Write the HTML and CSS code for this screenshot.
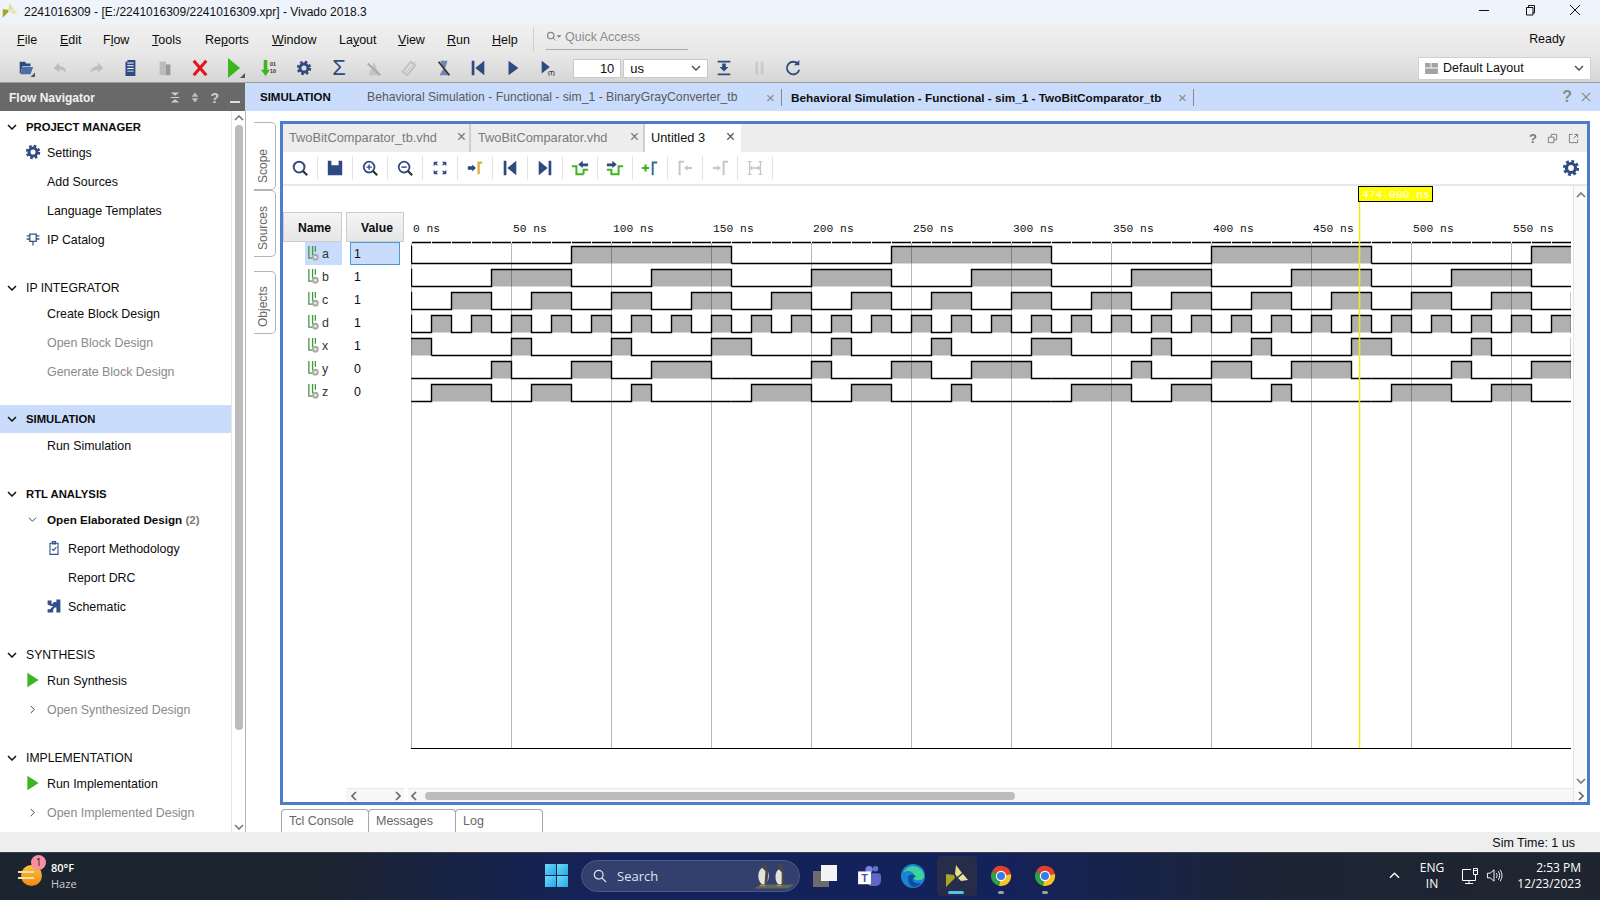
FILE: index.html
```html
<!DOCTYPE html>
<html lang="en">
<head>
<meta charset="utf-8">
<title>Vivado 2018.3</title>
<link rel="stylesheet" href="styles.css">
</head>
<body>
<svg class="defs" width="0" height="0">
  <symbol id="gear" viewBox="0 0 20 20"><circle cx="10" cy="10" r="7.5" fill="none" stroke="#2f4a80" stroke-width="3" stroke-dasharray="3.2 2.7"/><circle cx="10" cy="10" r="5" fill="none" stroke="#2f4a80" stroke-width="3.6"/></symbol>
  <symbol id="leaf" viewBox="0 0 24 24"><path d="M11 1l6 8-5 4-2-3z" fill="#e6e08a"/><path d="M1 10l8 1 1 3-9 9z" fill="#a8a520"/><path d="M13 14l5-4 5 6-7 1z" fill="#e8e4a0"/></symbol>
  <symbol id="sig" viewBox="0 0 14 18"><path d="M2 1v13h4M6 1v10M9 1v6" fill="none" stroke="#3d9a3d" stroke-width="1.4"/><circle cx="9" cy="13" r="3.6" fill="#aaa"/><circle cx="9" cy="13" r="1.4" fill="#eee"/></symbol>
  <symbol id="chrome" viewBox="0 0 24 24"><path d="M12 12L3.3 7A10 10 0 0 1 21.9 10z" fill="#e2402f"/><path d="M12 12l-8.700-5A10 10 0 0 0 10 21.800z" fill="#2e9e4a"/><path d="M12 12l9.900-2A10 10 0 0 1 10 21.800z" fill="#f7c325"/><circle cx="12" cy="12" r="5.200" fill="#fff"/><circle cx="12" cy="12" r="4" fill="#3b7de6"/></symbol>
</svg>

<header class="titlebar">
  <svg class="applogo" viewBox="0 0 24 24"><use href="#leaf"/></svg>
  <span class="title-text">2241016309 - [E:/2241016309/2241016309.xpr] - Vivado 2018.3</span>
  <svg class="winbtn" viewBox="0 0 12 12"><path d="M1 6.500h10" stroke="#111" fill="none"/></svg>
  <svg class="winbtn" viewBox="0 0 12 12"><path d="M2.500 3.500h6.500v7.500h-6.500zM4.500 3.500v-2h6v7.500h-2" stroke="#111" fill="none"/></svg>
  <svg class="winbtn" viewBox="0 0 12 12"><path d="M1 1l10 10M11 1L1 11" stroke="#111" fill="none"/></svg>
</header>

<div class="menubar">
  <nav class="menus">
    <span class="menu m-file"><u>F</u>ile</span>
    <span class="menu m-edit"><u>E</u>dit</span>
    <span class="menu m-flow">F<u>l</u>ow</span>
    <span class="menu m-tools"><u>T</u>ools</span>
    <span class="menu m-reports">Re<u>p</u>orts</span>
    <span class="menu m-window"><u>W</u>indow</span>
    <span class="menu m-layout">La<u>y</u>out</span>
    <span class="menu m-view"><u>V</u>iew</span>
    <span class="menu m-run"><u>R</u>un</span>
    <span class="menu m-help"><u>H</u>elp</span>
  </nav>
  <div class="quick">
    <svg class="quick-ic" viewBox="0 0 16 12"><circle cx="5" cy="5" r="3.500" fill="none" stroke="#888" stroke-width="1.400"/><path d="M7.500 7.500l3 3M12 5h4l-2 2z" stroke="#888" fill="#888"/></svg>
    <span>Quick Access</span>
  </div>
  <span class="ready">Ready</span>
</div>

<div class="toolbar">
  <span class="tb"><svg class="i20" viewBox="0 0 20 20"><path d="M3 3h6l1 2h5v3H6l-2 8H3z" fill="#2f4a80"/><path d="M6 9h12l-3 8H4z" fill="#4a6ea8"/><path d="M20 20h-5l5-5z" fill="#555"/></svg></span>
  <span class="tb"><svg class="i20" viewBox="0 0 20 20"><path d="M8 4L2 10l6 5v-3c4 0 6 1 8 4 0-5-3-8-8-8z" fill="#bdbdbd"/></svg></span>
  <span class="tb"><svg class="i20" viewBox="0 0 20 20"><path d="M12 4l6 6-6 5v-3c-4 0-6 1-8 4 0-5 3-8 8-8z" fill="#bdbdbd"/></svg></span>
  <span class="tb"><svg class="i20" viewBox="0 0 20 20"><path d="M7 1h9v18H5V3h2z" fill="#2f4a80"/><path d="M7 7h7v1H7zm0 3h7v1H7zm0 3h7v1H7zM7 4h7v1H7z" fill="#fff"/></svg></span>
  <span class="tb"><svg class="i20" viewBox="0 0 20 20"><path d="M4 3h7v15H4z" fill="#bbb"/><path d="M11 6h5v12h-5z" fill="#999"/></svg></span>
  <span class="tb"><svg class="i20" viewBox="0 0 20 20"><path d="M3 2l14 16M17 2L3 18" stroke="#e3141c" stroke-width="3.400" fill="none"/></svg></span>
  <span class="tb"><svg class="i20 i-play" viewBox="0 0 20 20"><path d="M3 0l12 10-12 10z" fill="#3cb521"/><path d="M20 20h-5l5-5z" fill="#555"/></svg></span>
  <span class="tb"><svg class="i20" viewBox="0 0 20 20"><path d="M3 1h4v11h3l-5 7-5-7h3z" fill="#3cb521"/><text class="bits" x="10" y="8">01</text><text class="bits" x="10" y="15">10</text></svg></span>
  <span class="tb"><svg class="i-gear" viewBox="0 0 20 20"><use href="#gear"/></svg></span>
  <span class="tb sigma">Σ</span>
  <span class="tb"><svg class="i20" viewBox="0 0 20 20"><path d="M4 18l6-15 6 15z" fill="#c4c4c4"/><path d="M3 5l14 13" stroke="#a8a8a8" stroke-width="2"/></svg></span>
  <span class="tb"><svg class="i20" viewBox="0 0 20 20"><path d="M3 14l9-11 5 4-9 11z" fill="none" stroke="#c0c0c0" stroke-width="2"/><path d="M5 17L17 3" stroke="#c0c0c0"/></svg></span>
  <span class="tb"><svg class="i20" viewBox="0 0 20 20"><path d="M6 2h8l-3 9 4 7H5l4-7z" fill="#6f87b5"/><path d="M4 3l12 15" stroke="#333" stroke-width="2"/></svg></span>
  <span class="tb"><svg class="i20" viewBox="0 0 20 20"><path d="M3 2h3v16H3zM17 2v16L7 10z" fill="#2f4a80"/></svg></span>
  <span class="tb"><svg class="i20" viewBox="0 0 20 20"><path d="M5 2l11 8-11 8z" fill="#2f4a80"/></svg></span>
  <span class="tb"><svg class="i20" viewBox="0 0 20 20"><path d="M3 2l9 7-9 7z" fill="#2f4a80"/><text class="bits" x="10" y="18">(T)</text></svg></span>
  <span class="time-input">10</span>
  <span class="time-unit">us<svg class="chev-s" viewBox="0 0 10 6"><path d="M1 1l4 4 4-4" fill="none" stroke="#555" stroke-width="1.500"/></svg></span>
  <span class="tb tb-after"><svg class="i20" viewBox="0 0 20 20"><path d="M3 2h14v2H3zM3 16h14v2H3zM8 5h4v4h3l-5 5-5-5h3z" fill="#2f4a80"/></svg></span>
  <span class="tb"><svg class="i20" viewBox="0 0 20 20"><path d="M6 3h3v14H6zM12 3h3v14h-3z" fill="#c9c9c9"/></svg></span>
  <span class="tb"><svg class="i20" viewBox="0 0 20 20"><path d="M16 6a7 7 0 1 0 1 6" fill="none" stroke="#2f4a80" stroke-width="2"/><path d="M17 1v6h-6z" fill="#2f4a80"/></svg></span>
  <span class="layout-select">
    <svg class="layout-ic" viewBox="0 0 14 12"><path d="M0 0h6v5H0zM7 0h7v5H7zM0 6h14v6H0z" fill="#a3a3a3"/></svg>
    <span class="layout-text">Default Layout</span>
    <svg class="chev-s" viewBox="0 0 10 6"><path d="M1 1l4 4 4-4" fill="none" stroke="#555" stroke-width="1.500"/></svg>
  </span>
</div>

<div class="headrow">
  <div class="flow-head">
    <span class="flow-title">Flow Navigator</span>
    <svg class="fh-ic" viewBox="0 0 12 12"><path d="M1 0h10L6 4zM1 12h10L6 8zM1 5.500h10v1H1z" fill="#cfcfcf"/></svg>
    <svg class="fh-ic" viewBox="0 0 12 12"><path d="M6 0l4 5H2zM6 12l-4-5h8z" fill="#bdbdbd"/></svg>
    <span class="fh-q">?</span>
    <span class="fh-min"></span>
  </div>
  <div class="sim-head">
    <span class="sim-label">SIMULATION</span>
    <span class="sim-tab">Behavioral Simulation - Functional - sim_1 - BinaryGrayConverter_tb</span>
    <span class="sim-x">×</span>
    <span class="sim-sep"></span>
    <span class="sim-tab sim-tab-on">Behavioral Simulation - Functional - sim_1 - TwoBitComparator_tb</span>
    <span class="sim-x">×</span>
    <span class="sim-sep"></span>
    <span class="sim-q">?</span>
    <svg class="sim-close" viewBox="0 0 12 12"><path d="M1 1l10 10M11 1L1 11" stroke="#8a8a8a" stroke-width="1.500"/></svg>
  </div>
</div>

<div class="body-row">
  <aside class="nav">
    <div class="nav-list">
      <section class="sec">
        <div class="head strong"><svg class="chev" viewBox="0 0 10 6"><path d="M1 1l4 4 4-4" fill="none" stroke="#111" stroke-width="1.500"/></svg>PROJECT MANAGER</div>
        <div class="item"><svg class="nav-ic" viewBox="0 0 20 20"><use href="#gear"/></svg>Settings</div>
        <div class="item">Add Sources</div>
        <div class="item">Language Templates</div>
        <div class="item"><svg class="nav-ic" viewBox="0 0 20 20"><path d="M6 4h8v9H6zM2 6h4M2 10h4M14 6h4M14 10h4M10 13v5" fill="none" stroke="#34508a" stroke-width="1.600"/></svg>IP Catalog</div>
      </section>
      <section class="sec">
        <div class="head"><svg class="chev" viewBox="0 0 10 6"><path d="M1 1l4 4 4-4" fill="none" stroke="#111" stroke-width="1.500"/></svg>IP INTEGRATOR</div>
        <div class="item">Create Block Design</div>
        <div class="item off">Open Block Design</div>
        <div class="item off">Generate Block Design</div>
      </section>
      <section class="sec">
        <div class="head strong active"><svg class="chev" viewBox="0 0 10 6"><path d="M1 1l4 4 4-4" fill="none" stroke="#111" stroke-width="1.500"/></svg>SIMULATION</div>
        <div class="item">Run Simulation</div>
      </section>
      <section class="sec">
        <div class="head strong"><svg class="chev" viewBox="0 0 10 6"><path d="M1 1l4 4 4-4" fill="none" stroke="#111" stroke-width="1.500"/></svg>RTL ANALYSIS</div>
        <div class="item strong"><svg class="twist" viewBox="0 0 10 6"><path d="M1 1l4 4 4-4" fill="none" stroke="#333"/></svg>Open Elaborated Design <span class="count">(2)</span></div>
        <div class="item deep"><svg class="nav-ic" viewBox="0 0 20 20"><path d="M5 4h10v14H5zM8 2h4v3H8zM7.500 11l2 2 3.500-4" fill="none" stroke="#34508a" stroke-width="1.400"/></svg>Report Methodology</div>
        <div class="item deep">Report DRC</div>
        <div class="item deep"><svg class="nav-ic" viewBox="0 0 20 20"><path d="M2 3h5v5l3-3h3V2h5v16h-5v-6h-2l-2 2v4H2v-4h3l4-4H6L2 8z" fill="#34508a"/></svg>Schematic</div>
      </section>
      <section class="sec">
        <div class="head"><svg class="chev" viewBox="0 0 10 6"><path d="M1 1l4 4 4-4" fill="none" stroke="#111" stroke-width="1.500"/></svg>SYNTHESIS</div>
        <div class="item"><svg class="nav-ic" viewBox="0 0 20 20"><path d="M3 1l14 9-14 9z" fill="#3cb521"/></svg>Run Synthesis</div>
        <div class="item off"><svg class="twist" viewBox="0 0 6 10"><path d="M1 1l4 4-4 4" fill="none" stroke="#333"/></svg>Open Synthesized Design</div>
      </section>
      <section class="sec">
        <div class="head"><svg class="chev" viewBox="0 0 10 6"><path d="M1 1l4 4 4-4" fill="none" stroke="#111" stroke-width="1.500"/></svg>IMPLEMENTATION</div>
        <div class="item"><svg class="nav-ic" viewBox="0 0 20 20"><path d="M3 1l14 9-14 9z" fill="#3cb521"/></svg>Run Implementation</div>
        <div class="item off"><svg class="twist" viewBox="0 0 6 10"><path d="M1 1l4 4-4 4" fill="none" stroke="#333"/></svg>Open Implemented Design</div>
      </section>
    </div>
    <div class="nav-scroll">
      <svg class="sb-arrow" viewBox="0 0 10 6"><path d="M1 5l4-4 4 4" fill="none" stroke="#777" stroke-width="1.600"/></svg>
      <span class="nav-thumb"></span>
      <svg class="sb-arrow sb-end" viewBox="0 0 10 6"><path d="M1 1l4 4 4-4" fill="none" stroke="#777" stroke-width="1.600"/></svg>
    </div>
  </aside>

  <main class="work">
    <div class="work-top">
      <div class="side-tabs">
        <span class="side-tab st-scope">Scope</span>
        <span class="side-tab st-sources">Sources</span>
        <span class="side-tab st-objects">Objects</span>
      </div>
      <div class="panel">
        <div class="ptabs">
          <span class="ptab pt1"><span class="pt-text">TwoBitComparator_tb.vhd</span><span class="pt-x">×</span></span>
          <span class="ptab pt2"><span class="pt-text">TwoBitComparator.vhd</span><span class="pt-x">×</span></span>
          <span class="ptab pt3 on"><span class="pt-text">Untitled 3</span><span class="pt-x">×</span></span>
          <span class="ptabs-right">
            <span class="ptq">?</span>
            <svg class="ptr" viewBox="0 0 12 12"><path d="M1.500 4.500h6v6h-6zM4.500 4.500v-3h6v6h-3" fill="none" stroke="#777"/></svg>
            <svg class="ptr" viewBox="0 0 12 12"><path d="M5 1.500H1.500v9h9V7M7 1.500h3.500V5M10.500 1.500L6 6" fill="none" stroke="#777"/></svg>
          </span>
        </div>
        <div class="wtools">
          <span class="wt"><svg class="i20" viewBox="0 0 20 20"><circle cx="9" cy="9" r="6" fill="none" stroke="#2f4a80" stroke-width="2.200"/><path d="M13 13l5 5" stroke="#333" stroke-width="2.500"/></svg></span>
          <span class="wt"><svg class="i20" viewBox="0 0 20 20"><path d="M2 2h4v5h8V2h4v16H2z" fill="#2f4a80"/></svg></span>
          <span class="wt"><svg class="i20" viewBox="0 0 20 20"><circle cx="9" cy="9" r="6" fill="none" stroke="#2f4a80" stroke-width="2"/><path d="M13 13l5 5" stroke="#333" stroke-width="2.500"/><path d="M6 9h6M9 6v6" stroke="#2f4a80" stroke-width="1.600"/></svg></span>
          <span class="wt"><svg class="i20" viewBox="0 0 20 20"><circle cx="9" cy="9" r="6" fill="none" stroke="#2f4a80" stroke-width="2"/><path d="M13 13l5 5" stroke="#333" stroke-width="2.500"/><path d="M6 9h6" stroke="#2f4a80" stroke-width="1.600"/></svg></span>
          <span class="wt"><svg class="i20" viewBox="0 0 20 20"><path d="M3 3h5L3 8zM17 3h-5l5 5zM3 17h5l-5-5zM17 17h-5l5-5z" fill="#2f4a80"/><path d="M4 4l3 3M16 4l-3 3M4 16l3-3M16 16l-3-3" stroke="#2f4a80" stroke-width="1.500"/></svg></span>
          <span class="wt"><svg class="i20" viewBox="0 0 20 20"><path d="M14 17V4h4" fill="none" stroke="#d9ac3a" stroke-width="2.400"/><path d="M2 8h5V6l4 4-4 4v-2H2z" fill="#2f4a80"/></svg></span>
          <span class="wt"><svg class="i20" viewBox="0 0 20 20"><path d="M3 2h3v16H3zM17 2v16L7 10z" fill="#2f4a80"/></svg></span>
          <span class="wt"><svg class="i20" viewBox="0 0 20 20"><path d="M17 2h-3v16h3zM3 2v16l10-8z" fill="#2f4a80"/></svg></span>
          <span class="wt"><svg class="i20" viewBox="0 0 20 20"><path d="M1 8h5v9h8M14 17v-5h5" fill="none" stroke="#3cb521" stroke-width="2.200"/><path d="M19 5h-6V2L8 6l5 4V8h6z" fill="#2f4a80"/></svg></span>
          <span class="wt"><svg class="i20" viewBox="0 0 20 20"><path d="M1 12h5v5h8V8h5" fill="none" stroke="#3cb521" stroke-width="2.200"/><path d="M1 5h6V2l5 4-5 4V8H1z" fill="#2f4a80"/></svg></span>
          <span class="wt"><svg class="i20" viewBox="0 0 20 20"><path d="M1 10h8M5 6v8" stroke="#3cb521" stroke-width="2.400"/><path d="M13 18V4h5" fill="none" stroke="#2f6f9a" stroke-width="2.200"/></svg></span>
          <span class="wt"><svg class="i20" viewBox="0 0 20 20"><path d="M4 18V3h5" fill="none" stroke="#c6c6c6" stroke-width="2.200"/><path d="M18 9h-5V7l-4 3 4 3v-2h5z" fill="#c6c6c6"/></svg></span>
          <span class="wt"><svg class="i20" viewBox="0 0 20 20"><path d="M14 18V3h5" fill="none" stroke="#c6c6c6" stroke-width="2.200"/><path d="M2 9h5V7l4 3-4 3v-2H2z" fill="#c6c6c6"/></svg></span>
          <span class="wt"><svg class="i20" viewBox="0 0 20 20"><path d="M4 3v14M16 3v14M5 10h10M7 8l-2 2 2 2M13 8l2 2-2 2M2 3h4M2 17h4M14 3h4M14 17h4" fill="none" stroke="#c6c6c6" stroke-width="1.400"/></svg></span>
          <span class="wt-gear"><svg class="i20" viewBox="0 0 20 20"><use href="#gear"/></svg></span>
        </div>
        <div class="wbody">
          <div class="wcenter">
            <div class="wmain">
              <div class="names">
                <div class="col-heads"><span class="col-name">Name</span><span class="col-value">Value</span></div>
                <div class="sigrow sel"><span class="signame"><svg class="sigic" viewBox="0 0 14 18"><use href="#sig"/></svg>a</span><span class="sigval">1</span></div>
                <div class="sigrow"><span class="signame"><svg class="sigic" viewBox="0 0 14 18"><use href="#sig"/></svg>b</span><span class="sigval">1</span></div>
                <div class="sigrow"><span class="signame"><svg class="sigic" viewBox="0 0 14 18"><use href="#sig"/></svg>c</span><span class="sigval">1</span></div>
                <div class="sigrow"><span class="signame"><svg class="sigic" viewBox="0 0 14 18"><use href="#sig"/></svg>d</span><span class="sigval">1</span></div>
                <div class="sigrow"><span class="signame"><svg class="sigic" viewBox="0 0 14 18"><use href="#sig"/></svg>x</span><span class="sigval">1</span></div>
                <div class="sigrow"><span class="signame"><svg class="sigic" viewBox="0 0 14 18"><use href="#sig"/></svg>y</span><span class="sigval">0</span></div>
                <div class="sigrow"><span class="signame"><svg class="sigic" viewBox="0 0 14 18"><use href="#sig"/></svg>z</span><span class="sigval">0</span></div>
              </div>
              <svg class="wave" width="1162" height="602" viewBox="0 0 1162 602">
                <defs>
                  <g id="period">
                    <path class="w" d="M0 77.500H160V60.500H320V77.500"/>
                    <path class="w" d="M0 100.500H80V83.500H160V100.500H240V83.500H320V100.500"/>
                    <path class="w" d="M0 123.500H40V106.500H80V123.500H120V106.500H160V123.500H200V106.500H240V123.500H280V106.500H320V123.500"/>
                    <path class="w" d="M0 146.500H20V129.500H40V146.500H60V129.500H80V146.500H100V129.500H120V146.500H140V129.500H160V146.500H180V129.500H200V146.500H220V129.500H240V146.500H260V129.500H280V146.500H300V129.500H320V146.500"/>
                    <path class="w" d="M20 169.500H100V152.500H120V169.500H200V152.500H220V169.500H300V152.500H340V169.500"/>
                    <path class="w" d="M0 192.500H80V175.500H100V192.500H160V175.500H200V192.500H240V175.500H300V192.500H320"/>
                    <path class="w" d="M0 215.500H20V198.500H80V215.500H120V198.500H160V215.500H220V198.500H240V215.500H320"/>
                  </g>
                </defs>
                <text class="tl" x="2" y="46">0 ns</text>
                <text class="tl" x="102" y="46">50 ns</text>
                <text class="tl" x="202" y="46">100 ns</text>
                <text class="tl" x="302" y="46">150 ns</text>
                <text class="tl" x="402" y="46">200 ns</text>
                <text class="tl" x="502" y="46">250 ns</text>
                <text class="tl" x="602" y="46">300 ns</text>
                <text class="tl" x="702" y="46">350 ns</text>
                <text class="tl" x="802" y="46">400 ns</text>
                <text class="tl" x="902" y="46">450 ns</text>
                <text class="tl" x="1002" y="46">500 ns</text>
                <text class="tl" x="1102" y="46">550 ns</text>
                <path class="axis axis-top" d="M1 56.500H1160"/>
                <svg x="0" y="0" width="1160" height="602" viewBox="0 0 1160 602">
                  <g transform="translate(0.5 0)">
                    <use href="#period" x="-320"/>
                    <use href="#period" x="0"/>
                    <use href="#period" x="320"/>
                    <use href="#period" x="640"/>
                    <use href="#period" x="960"/>
                  </g>
                </svg>
                <path class="grid" d="M0.500 57V562M100.500 57V562M200.500 57V562M300.500 57V562M400.500 57V562M500.500 57V562M600.500 57V562M700.500 57V562M800.500 57V562M900.500 57V562M1000.500 57V562M1100.500 57V562"/>
                <path class="axis" d="M0 562.500H1160"/>
                <path class="cursor" d="M948.500 16V562"/>
                <rect class="marker" x="947.500" y="0.500" width="74" height="15"/>
                <text class="marker-text" x="951" y="12">474.000 ns</text>
              </svg>
            </div>
            <div class="hbars">
              <span class="hb-left"><svg class="sb-h" viewBox="0 0 6 10"><path d="M5 1L1 5l4 4" fill="none" stroke="#666" stroke-width="1.600"/></svg><svg class="sb-h" viewBox="0 0 6 10"><path d="M1 1l4 4-4 4" fill="none" stroke="#666" stroke-width="1.600"/></svg></span>
              <span class="hb-right"><svg class="sb-h" viewBox="0 0 6 10"><path d="M5 1L1 5l4 4" fill="none" stroke="#666" stroke-width="1.600"/></svg><span class="hb-thumb"></span><svg class="sb-h sb-h-end" viewBox="0 0 6 10"><path d="M1 1l4 4-4 4" fill="none" stroke="#666" stroke-width="1.600"/></svg></span>
            </div>
          </div>
          <div class="vbar">
            <svg class="sb-arrow" viewBox="0 0 10 6"><path d="M1 5l4-4 4 4" fill="none" stroke="#777" stroke-width="1.600"/></svg>
            <svg class="sb-arrow sb-end" viewBox="0 0 10 6"><path d="M1 1l4 4 4-4" fill="none" stroke="#777" stroke-width="1.600"/></svg>
          </div>
        </div>
      </div>
    </div>
    <div class="btabs">
      <span class="btab">Tcl Console</span>
      <span class="btab">Messages</span>
      <span class="btab">Log</span>
    </div>
  </main>
</div>

<div class="status"><span>Sim Time: 1 us</span></div>

<footer class="taskbar">
  <div class="weather">
    <span class="sun"><span class="sun-bars"></span><span class="badge">1</span></span>
    <span class="wx-text"><span class="wx-temp">80°F</span><span class="wx-cond">Haze</span></span>
  </div>
  <div class="start">
    <span class="win"><i></i><i></i><i></i><i></i></span>
  </div>
  <div class="search">
    <svg class="search-ic" viewBox="0 0 16 16"><circle cx="6.500" cy="6.500" r="5" fill="none" stroke="#dfe3ee" stroke-width="1.400"/><path d="M10 10l5 5" stroke="#dfe3ee" stroke-width="1.400"/></svg>
    <span class="search-text">Search</span>
    <svg class="penguins" viewBox="0 0 44 26"><path d="M0 26l8-4h34l-6 4z" fill="#5c6a5a"/><ellipse cx="10" cy="13" rx="5.500" ry="9" fill="#e4e2da"/><path d="M8 1a3 3 0 0 1 5 1l2 6-1 14h-3l1-14-3-3z" fill="#44474d"/><ellipse cx="27" cy="14" rx="4.500" ry="8" fill="#e4e2da"/><path d="M25 3a2.500 2.500 0 0 1 5 0l2 7-1 11h-2l0-12-3-3z" fill="#44474d"/><path d="M6 23h6M24 23h5" stroke="#d8783a" stroke-width="1.500"/></svg>
  </div>
  <span class="taskview"><span class="tv-back"></span><span class="tv-front"></span></span>
  <svg class="app-teams" viewBox="0 0 26 24"><circle cx="19" cy="4" r="3" fill="#6a70c8"/><circle cx="12" cy="5" r="4" fill="#7b83eb"/><path d="M9 9h13a3 3 0 0 1 3 3v5a6 6 0 0 1-6 6h-4a6 6 0 0 1-6-6z" fill="#5f67c4"/><path d="M0 7h14v14H0z" fill="#fff"/><text class="teams-t" x="7" y="18">T</text></svg>
  <svg class="app-edge" viewBox="0 0 24 24"><circle cx="12" cy="12" r="12" fill="#1b83d3"/><path d="M2 9a11 11 0 0 1 21 2c1 5-5 6-8 5-4-1-2-4-2-5 0-3-7-6-11-2z" fill="#3fd0a0"/><path d="M7 14c0-4 6-5 8-1-2 0-4 1-3 4 1 2 5 3 8 2-3 4-8 5-10 3-2-2-3-5-3-8z" fill="#0c4f9c"/></svg>
  <span class="app-active"><svg class="app-viv" viewBox="0 0 24 24"><use href="#leaf"/></svg><span class="dot-on"></span></span>
  <span class="app-chrome"><svg class="chrome-ic" viewBox="0 0 24 24"><use href="#chrome"/></svg><span class="dot"></span></span>
  <span class="app-chrome"><svg class="chrome-ic" viewBox="0 0 24 24"><use href="#chrome"/></svg><span class="dot"></span></span>
  <div class="tray">
    <svg class="tray-up" viewBox="0 0 12 7"><path d="M1 6l5-5 5 5" fill="none" stroke="#fff" stroke-width="1.500"/></svg>
    <span class="lang"><span>ENG</span><span>IN</span></span>
    <svg class="tray-net" viewBox="0 0 18 18"><path d="M10 2.500H1.500v11h13V8M8 13.500v3M4 16.500h8" fill="none" stroke="#fff"/><path d="M12.500 1.500h4v6h-4zM12.500 3.500h4" fill="none" stroke="#fff"/></svg>
    <svg class="tray-vol" viewBox="0 0 18 18"><path d="M1.500 6.500h3l4-3.500v12l-4-3.500h-3zM11 6.500c1 1.500 1 3.500 0 5M13 4.500c2 3 2 6 0 9M15 3c2.500 4 2.500 8 0 12" fill="none" stroke="#fff"/></svg>
    <span class="clock"><span>2:53 PM</span><span>12/23/2023</span></span>
  </div>
</footer>
</body>
</html>
```

FILE: styles.css
```css
* { box-sizing: border-box; }
html, body { margin: 0; padding: 0; }
body {
  width: 1600px;
  height: 900px;
  overflow: hidden;
  display: flex;
  flex-direction: column;
  font-family: "Liberation Sans", Arial, sans-serif;
  font-size: 12.4px;
  color: #0c0c0c;
  background: #fff;
}
.defs { display: block; height: 0; }
svg { display: block; flex: none; }
u { text-decoration: underline; }

/* title */
.titlebar { height: 23px; flex: none; display: flex; align-items: center; background: #eff3fb; padding-left: 2px; padding-bottom: 3px; }
.applogo { width: 16px; height: 17px; }
.title-text { margin-left: 6px; font-size: 12px; flex: 1; color: #111; padding-top: 3px; }
.winbtn { width: 12px; height: 12px; margin-right: 33.500px; }
.winbtn:last-child { margin-right: 19px; }

/* menu + toolbar */
.menubar { height: 33px; flex: none; display: flex; align-items: center; background: linear-gradient(#f1f1f1, #e6e6e6); }
.menus { display: flex; align-items: center; padding-left: 17px; width: 534px; border-right: 1px solid #cfcfcf; height: 25px; }
.menu { display: block; font-size: 12.500px; }
.m-file { width: 43px; }
.m-edit { width: 43px; }
.m-flow { width: 49px; }
.m-tools { width: 53px; }
.m-reports { width: 67px; }
.m-window { width: 67px; }
.m-layout { width: 59px; }
.m-view { width: 49px; }
.m-run { width: 45px; }
.quick { display: flex; align-items: center; margin-left: 12px; width: 142px; height: 25px; margin-top: -5px; border-bottom: 1px solid #aaa; color: #8c8c8c; font-size: 12.500px; }
.quick-ic { width: 15px; height: 11px; margin-right: 4px; }
.ready { margin-left: auto; margin-right: 35px; margin-top: -1px; }

.toolbar { height: 27px; flex: none; display: flex; align-items: center; padding: 0 0 2px 8.600px; background: linear-gradient(#e6e6e6, #d6d6d6); border-bottom: 1px solid #9c9c9c; }
.tb { width: 34.800px; height: 24px; display: flex; align-items: center; justify-content: center; flex: none; }
.i20 { width: 18px; height: 18px; }
.i-play { width: 20px; height: 20px; }
.i-gear { width: 16px; height: 16px; }
.bits { font-family: "Liberation Sans", Arial, sans-serif; font-size: 6px; font-weight: 700; fill: #333; }
.sigma { font-size: 22px; color: #2f4a80; line-height: 24px; }
.time-input { width: 48px; height: 19px; margin-left: 8px; background: #fff; border: 1px solid #c9c9c9; text-align: right; padding-right: 6px; font-size: 13px; line-height: 17px; }
.time-unit { width: 85px; height: 19px; margin-left: 2px; background: #fff; border: 1px solid #c9c9c9; display: flex; align-items: center; justify-content: space-between; padding: 0 6px; font-size: 13px; }
.chev-s { width: 10px; height: 6px; }
.tb-after { margin-left: -2px; }
.layout-select { margin-left: auto; margin-right: 9px; width: 173px; height: 23px; background: #fff; border: 1px solid #d0d0d0; display: flex; align-items: center; padding: 0 6px; }
.layout-ic { width: 13px; height: 11px; margin-right: 5px; }
.layout-text { flex: 1; font-size: 12.500px; }

/* head row */
.headrow { height: 28px; flex: none; display: flex; }
.flow-head { width: 245px; background: #696969; display: flex; align-items: center; padding: 1px 0 0 9px; color: #f2f2f2; font-weight: 700; font-size: 12px; }
.flow-title { flex: 1; }
.fh-ic { width: 10px; height: 11px; margin-right: 10px; }
.fh-q { font-size: 14px; color: #cfcfcf; margin: 0 11px 0 0; font-weight: 700; }
.fh-min { width: 10px; height: 2px; background: #dedede; margin: 8px 5px 0 0; }
.sim-head { flex: 1; background: #c9dcfb; display: flex; align-items: center; padding-left: 15px; }
.sim-label { font-weight: 700; font-size: 11.500px; width: 107px; }
.sim-tab { color: #5a5a5a; font-size: 12.200px; width: 399px; white-space: nowrap; }
.sim-tab-on { color: #101010; font-weight: 700; font-size: 11.770px; width: 387px; }
.sim-x { color: #888; font-size: 15px; width: 15px; }
.sim-sep { width: 1px; height: 17px; background: #888; margin-right: 9px; }
.sim-q { margin-left: auto; font-size: 16px; font-weight: 700; color: #8a8a8a; margin-right: 9px; }
.sim-close { width: 10px; height: 10px; margin-right: 9px; }

/* body */
.body-row { flex: 1; min-height: 0; display: flex; }
.nav { width: 246px; flex: none; display: flex; border-right: 1px solid #b5b5b5; }
.nav-list { width: 232px; padding-top: 4px; border-right: 1px solid #e6e6e6; }
.sec { margin-bottom: 22px; }
.head { height: 23px; display: flex; align-items: center; padding-left: 7px; font-size: 12.200px; }
.chev { width: 10px; height: 6px; margin-right: 9px; }
.strong { font-weight: 700; }
.head.strong { font-size: 11.300px; }
.active { height: 28px; background: #c9dcfb; margin-top: -3px; margin-bottom: -2px; }
.item { height: 29px; display: flex; align-items: center; padding-left: 47px; position: relative; white-space: pre; }
.item.strong { font-size: 11.650px; }
.deep { padding-left: 68px; }
.off { color: #8a8a8a; }
.count { color: #7a7a7a; }
.nav-ic { width: 16px; height: 16px; position: absolute; left: 25px; top: 6px; }
.deep .nav-ic { left: 46px; }
.twist { width: 9px; height: 9px; position: absolute; left: 28px; top: 10px; }
.nav-scroll { width: 13px; display: flex; flex-direction: column; align-items: center; padding-top: 4px; padding-bottom: 2px; }
.sb-arrow { width: 10px; height: 6px; flex: none; }
.nav-thumb { width: 8px; height: 605px; margin-top: 4px; border-radius: 4px; background: #bcbcbc; }
.sb-end { margin-top: auto; }

/* work */
.work { flex: 1; min-width: 0; display: flex; flex-direction: column; }
.work-top { flex: 1; min-height: 0; display: flex; padding: 10px 10px 4px 8px; }
.side-tabs { width: 22px; flex: none; margin-right: 4px; display: flex; flex-direction: column; }
.side-tab { display: flex; align-items: center; justify-content: flex-start; writing-mode: vertical-rl; transform: rotate(180deg); color: #666; font-size: 12px; border: 1px solid #b4b4b4; border-right: none; padding: 6px 0 0 4px; border-bottom-left-radius: 5px; border-top-left-radius: 5px; }
.st-scope { height: 68px; margin-top: 1px; }
.st-sources { height: 67px; }
.st-objects { height: 63px; margin-top: 14px; }
.panel { flex: 1; min-width: 0; border: 3px solid #4a7dcb; display: flex; flex-direction: column; background: #fff; }
.ptabs { height: 28px; flex: none; background: #ededed; display: flex; align-items: center; }
.ptab { height: 100%; display: flex; align-items: center; padding: 0 0 2px 6px; font-size: 12.800px; color: #7a7a7a; border-right: 2px solid #cfcfcf; }
.pt1 { width: 188px; }
.pt2 { width: 174px; padding-left: 7px; }
.pt3 { width: 96px; background: #fff; color: #111; border-right: none; }
.pt-text { white-space: nowrap; }
.pt-x { margin-left: auto; margin-right: 3px; font-size: 16px; color: #777; }
.pt2 .pt-x { margin-right: 4px; }
.pt3 .pt-x { color: #555; margin-right: 6px; }
.ptabs-right { margin-left: auto; display: flex; align-items: center; padding-right: 8px; }
.ptq { font-weight: 700; color: #777; font-size: 13px; margin-right: 10px; }
.ptr { width: 11px; height: 11px; margin-left: 10px; }
.ptq + .ptr { margin-left: 0; }
.wtools { height: 34px; flex: none; display: flex; align-items: center; border-bottom: 2px solid #e8e8e8; }
.wt { width: 35px; height: 24px; display: flex; align-items: center; justify-content: center; border-right: 1px solid #e3e3e3; }
.wt-gear { margin-left: auto; margin-right: 7px; }
.wbody { flex: 1; min-height: 0; display: flex; }
.wcenter { flex: 1; min-width: 0; display: flex; flex-direction: column; }
.wmain { flex: 1; min-height: 0; display: flex; }
.names { width: 128px; flex: none; padding-top: 26px; }
.col-heads { display: flex; height: 30px; gap: 4px; font-weight: 700; font-size: 12.200px; }
.col-name, .col-value { background: linear-gradient(#f4f4f4, #e6e6e6); border: 1px solid #cdcdcd; display: flex; align-items: center; justify-content: center; padding: 2px 0 0 4px; }
.col-name { width: 59px; }
.col-value { width: 58px; }
.sigrow { height: 23px; display: flex; align-items: center; }
.signame { width: 37px; height: 23px; margin-left: 22px; display: flex; align-items: center; padding-left: 2px; color: #333; }
.sigic { width: 13px; height: 17px; margin-right: 2px; }
.sigval { margin-left: 8px; width: 50px; height: 23px; padding-left: 3px; display: flex; align-items: center; border: 1px solid transparent; }
.sel .signame { background: #c9dcfb; }
.sel .sigval { background: #c9dcfb; border-color: #4a9ad8; }
.wave { background: #fff; }
.w { fill: #b0b0b0; stroke: #000; stroke-width: 1.400; }
.tl { font-family: "Liberation Mono", "Courier New", monospace; font-size: 11.300px; fill: #111; }
.axis { stroke: #000; stroke-width: 1; fill: none; }
.axis-top { stroke-width: 1.400; stroke-dasharray: 19 1; }
.grid { stroke: #000; stroke-opacity: 0.280; stroke-width: 1; fill: none; }
.cursor { stroke: #f5e915; stroke-width: 1.500; fill: none; }
.marker { fill: #ffff00; stroke: #000; stroke-width: 1; }
.marker-text { font-family: "Liberation Mono", "Courier New", monospace; font-size: 11.300px; fill: #fff; }
.hbars { height: 14px; flex: none; display: flex; padding-left: 63px; }
.hb-left { width: 58px; background: #f7f7f7; border-top: 1px solid #e8e8e8; display: flex; justify-content: space-between; align-items: center; padding: 0 3px 0 5px; }
.hb-right { flex: 1; margin-left: 4px; background: #f7f7f7; border-top: 1px solid #e8e8e8; display: flex; align-items: center; padding-left: 3px; }
.sb-h { width: 6px; height: 10px; }
.hb-thumb { width: 590px; height: 8px; border-radius: 4px; background: #bcbcbc; margin-left: 8px; }
.sb-h-end { margin-left: auto; margin-right: -11px; position: relative; z-index: 1; }
.vbar { width: 14px; flex: none; background: #fafafa; border-left: 1px solid #e4e4e4; display: flex; flex-direction: column; align-items: center; padding: 6px 0 18px; }

.btabs { height: 23px; flex: none; display: flex; padding-left: 35px; }
.btab { width: 88px; border: 1px solid #a6a6a6; border-bottom: none; border-radius: 4px 4px 0 0; padding: 4px 0 0 7px; color: #666; font-size: 12.500px; margin-right: -1px; }

/* status */
.status { height: 20px; flex: none; background: #eeeeee; text-align: right; padding: 4px 25px 0 0; font-size: 12.500px; }

/* taskbar */
.taskbar { height: 48px; flex: none; display: flex; align-items: center; padding-bottom: 2px; background: linear-gradient(90deg, #1c2430 0, #1c2430 20%, #14225c 38%, #14225c 62%, #1d2434 80%, #1f2530 100%); border-top: 1px solid #3a3f4a; color: #fff; font-family: "Segoe UI", "Open Sans", "Noto Sans", sans-serif; }
.weather { width: 545px; display: flex; align-items: center; padding-left: 21px; flex: none; }
.sun { width: 21px; height: 21px; border-radius: 50%; background: linear-gradient(#f7c43a, #f08a12); position: relative; margin-right: 9px; }
.sun-bars { display: block; position: absolute; left: -3px; top: 6px; width: 16px; height: 8px; border-top: 2px solid #f6e2a8; border-bottom: 2px solid #f6e2a8; }
.badge { position: absolute; left: 10px; top: -10px; width: 15px; height: 15px; border-radius: 50%; background: #f98fa4; color: #1a1a1a; font-size: 10px; text-align: center; line-height: 15px; }
.wx-text { display: flex; flex-direction: column; font-size: 11px; line-height: 16px; }
.wx-temp { font-weight: 600; font-size: 11px; }
.wx-cond { color: #c8ccd2; }
.start { width: 36px; flex: none; }
.win { display: grid; grid-template-columns: 11px 11px; grid-auto-rows: 11px; gap: 1px; }
.win i { background: linear-gradient(135deg, #6fdcf7, #23a6e8); display: block; }
.search { width: 219px; height: 32px; border-radius: 16px; background: #33406e; border: 1px solid #4b5683; flex: none; display: flex; align-items: center; padding-left: 11px; }
.search-ic { width: 14px; height: 14px; }
.search-text { margin-left: 10px; font-size: 13px; color: #dfe3ee; flex: 1; }
.penguins { width: 42px; height: 26px; margin-right: 3px; }
.taskview { width: 24px; height: 22px; margin-left: 13px; flex: none; position: relative; }
.tv-back { position: absolute; left: 0; bottom: 0; width: 16px; height: 16px; background: #6c6c6c; }
.tv-front { position: absolute; right: 0; top: 0; width: 16px; height: 16px; background: #f4f4f4; }
.app-teams { width: 24px; height: 22px; margin-left: 21px; }
.teams-t { font-family: "Liberation Sans", sans-serif; font-size: 12px; font-weight: 700; fill: #4b53bc; text-anchor: middle; }
.app-edge { width: 24px; height: 24px; margin-left: 19px; }
.app-active { width: 40px; height: 40px; margin-left: 12px; border-radius: 4px; background: #262c4a; display: flex; align-items: center; justify-content: center; position: relative; flex: none; }
.app-viv { width: 24px; height: 24px; }
.dot-on { position: absolute; bottom: 2px; left: 11px; width: 16px; height: 3px; border-radius: 2px; background: #4fc3f7; }
.app-chrome { width: 24px; height: 40px; margin-left: 12px; display: flex; align-items: center; position: relative; flex: none; }
.app-chrome + .app-chrome { margin-left: 20px; }
.chrome-ic { width: 24px; height: 24px; }
.dot { position: absolute; bottom: 2px; left: 9px; width: 6px; height: 3px; border-radius: 2px; background: #9aa0ac; }
.tray { margin-left: auto; display: flex; align-items: center; padding-right: 19px; font-size: 12px; }
.tray-up { width: 11px; height: 7px; }
.lang { display: flex; flex-direction: column; align-items: center; margin-left: 17px; width: 30px; line-height: 16px; }
.tray-net { width: 18px; height: 18px; margin-left: 14px; }
.tray-vol { width: 17px; height: 17px; margin-left: 7px; }
.clock { display: flex; flex-direction: column; align-items: flex-end; margin-left: 16px; width: 62px; line-height: 16px; white-space: nowrap; }
```
